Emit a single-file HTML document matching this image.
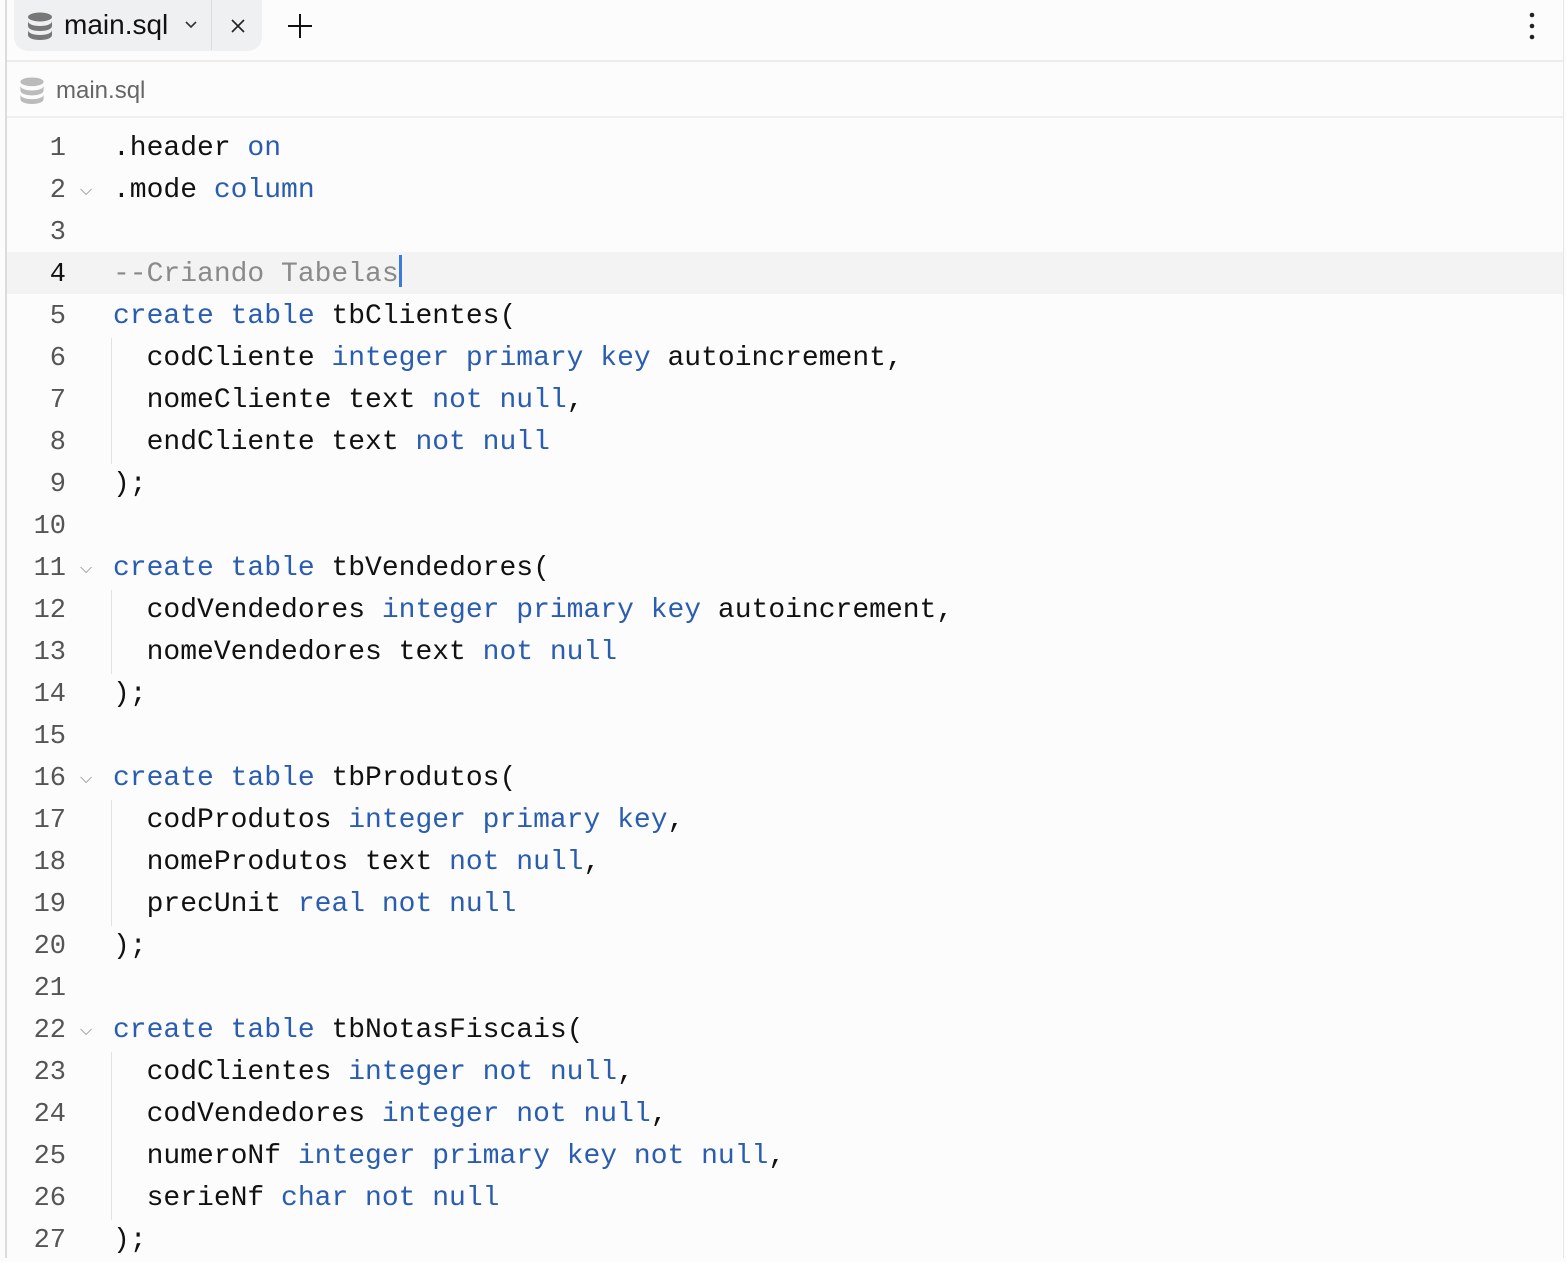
<!DOCTYPE html>
<html><head><meta charset="utf-8"><style>
*{margin:0;padding:0;box-sizing:border-box}
body{width:1566px;height:1258px;background:#fcfcfc;position:relative;overflow:hidden;font-family:"Liberation Sans",sans-serif}
.lb{position:absolute;left:5px;top:0;bottom:0;width:2px;background:#dcdcdc}
.rb{position:absolute;right:2px;top:0;bottom:0;width:1px;background:#e6e6e6}
.tab{position:absolute;left:14px;top:0;width:248px;height:51px;background:#eff0f2;border-radius:0 0 14px 14px}
.tab .div{position:absolute;left:197px;top:0;width:1px;height:50px;background:#dcdde0}
.t{position:absolute;font-size:28px;color:#111}
.hl1{position:absolute;left:7px;right:3px;top:60px;height:2px;background:#ececec}
.hl2{position:absolute;left:7px;right:3px;top:116px;height:2px;background:#efefef}
.cur{position:absolute;left:7px;right:3px;top:252px;height:42px;background:#f3f3f3}
.code{position:absolute;left:0;top:128px;font-family:"Liberation Mono",monospace;font-size:28px;line-height:42px}
.ln{position:absolute;left:0;width:66px;text-align:right;color:#555;font-family:"Liberation Mono",monospace;font-size:27px}
.ln.a{color:#111}
.fold{position:absolute;left:80px;color:#888;font-size:16px}
.c{position:absolute;left:113px;white-space:pre;color:#111}
.k{color:#2a5db0}
.cm{color:#8a8a8a}
.g{position:absolute;left:111px;width:1px;background:#e2e2e2}
.caret{display:inline-block;width:3px;height:32px;background:#3b7be0;vertical-align:-6px}
</style></head><body>
<div class="lb"></div><div class="rb"></div>
<div class="tab"><div class="div"></div></div>
<svg style="position:absolute;left:27px;top:12px" width="26" height="28" viewBox="0 0 26 28"><g fill="#777"><ellipse cx="13" cy="5" rx="12" ry="4.5"/><path d="M1 9c0 3 5 5 12 5s12-2 12-5v5c0 3-5 5-12 5S1 17 1 14z"/><path d="M1 18c0 3 5 5 12 5s12-2 12-5v5c0 3-5 5-12 5S1 26 1 23z"/></g></svg>
<div class="t" style="left:64px;top:9px">main.sql</div>
<svg style="position:absolute;left:184px;top:20px" width="14" height="10"><path d="M2 2l5 5 5-5" stroke="#333" stroke-width="1.6" fill="none"/></svg>
<svg style="position:absolute;left:230px;top:18px" width="16" height="16"><path d="M2 2l12 12M14 2L2 14" stroke="#222" stroke-width="1.6"/></svg>
<svg style="position:absolute;left:287px;top:13px" width="26" height="26"><path d="M13 1v24M1 13h24" stroke="#111" stroke-width="2"/></svg>
<svg style="position:absolute;left:1528px;top:12px" width="8" height="28"><circle cx="4" cy="3" r="2.3" fill="#222"/><circle cx="4" cy="14" r="2.3" fill="#222"/><circle cx="4" cy="25" r="2.3" fill="#222"/></svg>
<div class="hl1"></div>
<svg style="position:absolute;left:19px;top:77px" width="26" height="27" viewBox="0 0 26 28"><g fill="#bbb"><ellipse cx="13" cy="5" rx="12" ry="4.5"/><path d="M1 9c0 3 5 5 12 5s12-2 12-5v5c0 3-5 5-12 5S1 17 1 14z"/><path d="M1 18c0 3 5 5 12 5s12-2 12-5v5c0 3-5 5-12 5S1 26 1 23z"/></g></svg>
<div class="t" style="left:56px;top:77px;font-size:24px;color:#666">main.sql</div>
<div class="hl2"></div>
<div class="cur"></div>
<div class="code">
<div class="g" style="top:210px;height:126px"></div>
<div class="g" style="top:462px;height:84px"></div>
<div class="g" style="top:672px;height:126px"></div>
<div class="g" style="top:924px;height:168px"></div>
<div class="ln" style="top:0">1</div><div class="c" style="top:0">.header <span class="k">on</span></div>
<div class="ln" style="top:42px">2</div><div class="fold" style="top:42px">⌵</div><div class="c" style="top:42px">.mode <span class="k">column</span></div>
<div class="ln" style="top:84px">3</div>
<div class="ln a" style="top:126px">4</div><div class="c cm" style="top:126px">--Criando Tabelas<span class="caret"></span></div>
<div class="ln" style="top:168px">5</div><div class="c" style="top:168px"><span class="k">create table</span> tbClientes(</div>
<div class="ln" style="top:210px">6</div><div class="c" style="top:210px">  codCliente <span class="k">integer primary key</span> autoincrement,</div>
<div class="ln" style="top:252px">7</div><div class="c" style="top:252px">  nomeCliente text <span class="k">not null</span>,</div>
<div class="ln" style="top:294px">8</div><div class="c" style="top:294px">  endCliente text <span class="k">not null</span></div>
<div class="ln" style="top:336px">9</div><div class="c" style="top:336px">);</div>
<div class="ln" style="top:378px">10</div>
<div class="ln" style="top:420px">11</div><div class="fold" style="top:420px">⌵</div><div class="c" style="top:420px"><span class="k">create table</span> tbVendedores(</div>
<div class="ln" style="top:462px">12</div><div class="c" style="top:462px">  codVendedores <span class="k">integer primary key</span> autoincrement,</div>
<div class="ln" style="top:504px">13</div><div class="c" style="top:504px">  nomeVendedores text <span class="k">not null</span></div>
<div class="ln" style="top:546px">14</div><div class="c" style="top:546px">);</div>
<div class="ln" style="top:588px">15</div>
<div class="ln" style="top:630px">16</div><div class="fold" style="top:630px">⌵</div><div class="c" style="top:630px"><span class="k">create table</span> tbProdutos(</div>
<div class="ln" style="top:672px">17</div><div class="c" style="top:672px">  codProdutos <span class="k">integer primary key</span>,</div>
<div class="ln" style="top:714px">18</div><div class="c" style="top:714px">  nomeProdutos text <span class="k">not null</span>,</div>
<div class="ln" style="top:756px">19</div><div class="c" style="top:756px">  precUnit <span class="k">real not null</span></div>
<div class="ln" style="top:798px">20</div><div class="c" style="top:798px">);</div>
<div class="ln" style="top:840px">21</div>
<div class="ln" style="top:882px">22</div><div class="fold" style="top:882px">⌵</div><div class="c" style="top:882px"><span class="k">create table</span> tbNotasFiscais(</div>
<div class="ln" style="top:924px">23</div><div class="c" style="top:924px">  codClientes <span class="k">integer not null</span>,</div>
<div class="ln" style="top:966px">24</div><div class="c" style="top:966px">  codVendedores <span class="k">integer not null</span>,</div>
<div class="ln" style="top:1008px">25</div><div class="c" style="top:1008px">  numeroNf <span class="k">integer primary key not null</span>,</div>
<div class="ln" style="top:1050px">26</div><div class="c" style="top:1050px">  serieNf <span class="k">char not null</span></div>
<div class="ln" style="top:1092px">27</div><div class="c" style="top:1092px">);</div>
</div>
</body></html>
